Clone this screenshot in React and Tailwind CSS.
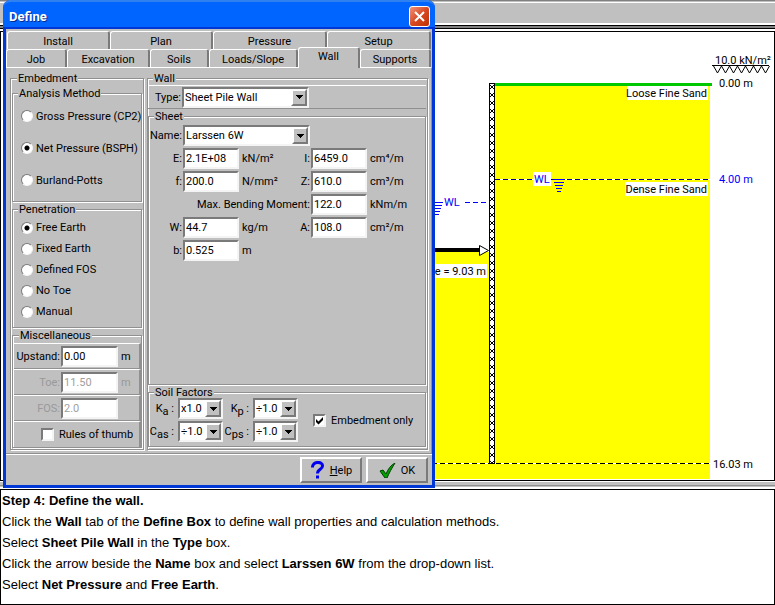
import React, { useState } from "react";
import clsx from "clsx";

const topTabs = [
  { name: "Install", width: "w-[103px]" },
  { name: "Plan", width: "w-[103px]" },
  { name: "Pressure", width: "w-[114px]" },
  { name: "Setup", width: "flex-1" },
];

const bottomTabs = [
  { name: "Job", width: "w-[61px]" },
  { name: "Excavation", width: "w-[83px]" },
  { name: "Soils", width: "w-[59px]" },
  { name: "Loads/Slope", width: "w-[89px]" },
  { name: "Wall", width: "w-[62px]" },
  { name: "Supports", width: "flex-1" },
];

const sunken =
  "border-2 border-t-[#7a7a7a] border-l-[#7a7a7a] border-r-[#f4f4f4] border-b-[#f4f4f4] bg-white";
const raised =
  "border-2 border-t-white border-l-white border-r-[#7a7a7a] border-b-[#7a7a7a] bg-[#c0c0c0]";

const Group = ({ title, className, children }) => (
  <fieldset
    className={clsx(
      "min-w-0 border border-[#909090] shadow-[1px_1px_0_#fff,inset_1px_1px_0_#fff]",
      className,
    )}
  >
    <legend className="ml-[5px] h-3 bg-[#c0c0c0] px-px leading-[14px]">{title}</legend>
    {children}
  </fieldset>
);

const Radio = ({ name, label, value, onChange, className }) => (
  <label className={clsx("flex items-center gap-[3px] pl-2", className)}>
    <input
      type="radio"
      name={name}
      checked={value === label}
      onChange={() => onChange(label)}
      className="size-3 shrink-0 appearance-none rounded-full border border-t-[#7a7a7a] border-l-[#7a7a7a] border-r-[#f4f4f4] border-b-[#f4f4f4] bg-white checked:bg-[radial-gradient(circle,#000_2px,#fff_3px)]"
    />
    {label}
  </label>
);

const Check = ({ label, defaultChecked, className }) => (
  <label className={clsx("flex items-center gap-[5px]", className)}>
    <span className="grid size-[13px]">
      <input
        type="checkbox"
        defaultChecked={defaultChecked}
        className={clsx("peer col-start-1 row-start-1 size-[13px] appearance-none", sunken)}
      />
      <svg
        viewBox="0 0 13 13"
        className="pointer-events-none invisible col-start-1 row-start-1 size-[13px] peer-checked:visible"
      >
        <path d="M3 5v3l2.5 2.5L10 6V3L5.5 7.5Z" />
      </svg>
    </span>
    {label}
  </label>
);

const Drop = ({ id, label, options, className }) => (
  <span className={clsx("relative block h-[21px]", className)}>
    <select
      id={id}
      aria-label={label}
      className={clsx("block h-full w-full appearance-none pl-px text-[11px]", sunken)}
    >
      {options.map((option) => (
        <option key={option}>{option}</option>
      ))}
    </select>
    <span
      className={clsx(
        "pointer-events-none absolute top-[2px] right-[2px] bottom-[2px] flex w-4 items-center justify-center",
        raised,
      )}
    >
      <svg viewBox="0 0 7 4" className="h-1 w-[7px]" shapeRendering="crispEdges">
        <path d="M0 0h7v1h-1v1h-1v1h-1v1h-1v-1h-1v-1h-1v-1h-1z" />
      </svg>
    </span>
  </span>
);

const Field = ({ id, value, className, disabled }) => (
  <input
    id={id}
    type="text"
    defaultValue={value}
    disabled={disabled}
    className={clsx("block h-[21px] min-w-0 pl-px text-[11px] disabled:text-[#a0a0a0]", sunken, className)}
  />
);

const MiscRow = ({ id, label, value, unit, disabled }) => (
  <div
    className={clsx(
      "flex h-[26px] items-center border-t border-r-2 border-b border-t-white border-r-[#909090] border-b-[#909090]",
      disabled && "text-[#999]",
    )}
  >
    <label htmlFor={id} className="w-[47px] pr-px text-right">
      {label}:
    </label>
    <Field id={id} value={value} disabled={disabled} className="w-[57px]" />
    <span className="pl-[3px]">{unit}</span>
  </div>
);

const FieldLabel = ({ htmlFor, children, className }) => (
  <label htmlFor={htmlFor} className={clsx("text-right", className)}>
    {children}
  </label>
);

const Tab = ({ tab, active, onSelect }) => (
  <button
    role="tab"
    aria-selected={active}
    onClick={() => onSelect(tab.name)}
    className={clsx(
      "rounded-t-[3px] border-t border-r-2 border-l border-t-white border-r-[#7a7a7a] border-l-white bg-[#c0c0c0] pt-px",
      tab.width,
      active ? "z-10 -mt-[2px] -mb-px pb-1" : "",
    )}
  >
    {tab.name}
  </button>
);

const WaterMark = ({ x, y }) => (
  <g stroke="#0000ff" transform={`translate(${x} ${y})`}>
    <path d="M-6 .5h12M-5 3.5h10M-4 6.5h8M-3 9.5h6M-2 12.5h4" />
  </g>
);

// Cross-section of the wall, y runs in page pixels from the top of the sheet
const Section = () => (
  <svg
    viewBox="1 32 773 448"
    className="block h-[448px] w-[773px] shrink-0 font-['Roboto',sans-serif] text-[11px]"
    shapeRendering="crispEdges"
  >
    <defs>
      <pattern id="links" x="490" y="85" width="4" height="8" patternUnits="userSpaceOnUse">
        <rect width="4" height="8" fill="#fff" />
        <path d="M0 0h1v1h-1zM3 0h1v1h-1zM1 1h2v2h-2zM0 3h1v1h-1zM3 3h1v1h-1z" />
      </pattern>
    </defs>
    <rect x="489" y="86" width="221" height="393" fill="#ff0" />
    <rect x="400" y="252" width="89" height="227" fill="#ff0" />
    <rect x="495" y="83" width="217" height="3" fill="#00c800" />

    <path d="M495 179.5h215" stroke="#fff" />
    <path d="M495 179.5h215" stroke="#000080" strokeDasharray="5 3" />
    <path d="M400 463.5h310" stroke="#fff" />
    <path d="M400 463.5h310" stroke="#000" strokeDasharray="5 3" />

    <rect x="489.5" y="83.5" width="5" height="380" fill="url(#links)" stroke="#000" />

    <rect x="627" y="86" width="81" height="14" fill="#fff" />
    <text x="707" y="97" textAnchor="end">Loose Fine Sand</text>
    <rect x="625" y="182" width="83" height="14" fill="#fff" />
    <text x="707" y="193" textAnchor="end">Dense Fine Sand</text>

    <rect x="533" y="172" width="18" height="14" fill="#fff" />
    <text x="534" y="183" fill="#0000ff">WL</text>
    <WaterMark x={559} y={179} />

    <WaterMark x={437} y={202} />
    <text x="444" y="206" fill="#0000ff">WL</text>
    <path d="M465 202.5h22" stroke="#0000ff" strokeDasharray="5 3" />

    <rect x="400" y="248" width="80" height="4" />
    <path d="M479.5 245.5v10l9 -5z" fill="#fff" stroke="#000" shapeRendering="auto" />
    <rect x="400" y="264" width="87" height="14" fill="#fff" />
    <text x="486" y="275" textAnchor="end">Toe = 9.03 m</text>

    <text x="715" y="64">10.0 kN/m²</text>
    <path
      d="M712 65.5h57M713.5 66l4 7l4 -7l4 7l4 -7l4 7l4 -7l4 7l4 -7l4 7l4 -7l4 7l4 -7l4 7l4 -7"
      fill="none"
      stroke="#000"
      shapeRendering="auto"
    />
    <text x="719" y="87">0.00 m</text>
    <text x="719" y="183" fill="#0000ff">4.00 m</text>
    <text x="713" y="468">16.03 m</text>
  </svg>
);

const EmbedmentPane = () => {
  const [method, setMethod] = useState("Net Pressure (BSPH)");
  const [penetration, setPenetration] = useState("Free Earth");

  return (
    <Group title="Embedment" className="w-[134px] px-px pt-[3px] pb-px">
      <Group title="Analysis Method" className="pt-px pb-[5px]">
        {["Gross Pressure (CP2)", "Net Pressure (BSPH)", "Burland-Potts"].map((item) => (
          <Radio key={item} name="method" label={item} value={method} onChange={setMethod} className="h-8" />
        ))}
      </Group>
      <Group title="Penetration" className="mt-px pt-[2px] pb-[5px]">
        {["Free Earth", "Fixed Earth", "Defined FOS", "No Toe", "Manual"].map((item) => (
          <Radio
            key={item}
            name="penetration"
            label={item}
            value={penetration}
            onChange={setPenetration}
            className="h-[21px]"
          />
        ))}
      </Group>
      <Group title="Miscellaneous" className="mt-px pt-[2px] pl-px">
        <MiscRow id="upstand" label="Upstand" value="0.00" unit="m" />
        <MiscRow id="toe" label="Toe" value="11.50" unit="m" disabled />
        <MiscRow id="fos" label="FOS" value="2.0" unit="" disabled />
        <div className="flex h-[26px] items-center border-t border-r-2 border-t-white border-r-[#909090] pl-[27px]">
          <Check label="Rules of thumb" />
        </div>
      </Group>
    </Group>
  );
};

const WallPane = () => (
  <Group title="Wall" className="flex-1 pt-px pb-px">
    <div className="mr-px flex h-6 items-center border-t border-b border-t-white border-b-[#909090]">
      <FieldLabel htmlFor="type" className="w-[34px] pr-px">Type:</FieldLabel>
      <Drop id="type" options={["Sheet Pile Wall", "Bored Pile Wall", "Diaphragm Wall"]} className="w-[127px]" />
    </div>
    <Group title="Sheet" className="mt-px mr-px h-[275px] pt-[2px]">
      <div className="flex h-[23px] items-center">
        <FieldLabel htmlFor="name" className="w-[34px] pr-px">Name:</FieldLabel>
        <Drop id="name" options={["Larssen 6W", "Larssen 20W", "Larssen 25W"]} className="w-[127px]" />
      </div>
      <div className="grid grid-cols-[34px_56px_72px_56px_1fr]">
        <div className="col-span-5 grid h-[23px] grid-cols-subgrid items-center">
          <FieldLabel htmlFor="e" className="pr-px">E:</FieldLabel>
          <Field id="e" value="2.1E+08" />
          <span className="flex justify-between pr-px pl-[3px]">
            kN/m² <label htmlFor="i">I:</label>
          </span>
          <Field id="i" value="6459.0" />
          <span className="pl-[3px]">cm⁴/m</span>
        </div>
        <div className="col-span-5 grid h-[23px] grid-cols-subgrid items-center">
          <FieldLabel htmlFor="f" className="pr-px">f:</FieldLabel>
          <Field id="f" value="200.0" />
          <span className="flex justify-between pr-px pl-[3px]">
            N/mm² <label htmlFor="z">Z:</label>
          </span>
          <Field id="z" value="610.0" />
          <span className="pl-[3px]">cm³/m</span>
        </div>
        <div className="col-span-5 grid h-[23px] grid-cols-subgrid items-center">
          <FieldLabel htmlFor="moment" className="col-span-3 pr-px">Max. Bending Moment:</FieldLabel>
          <Field id="moment" value="122.0" />
          <span className="pl-[3px]">kNm/m</span>
        </div>
        <div className="col-span-5 grid h-[23px] grid-cols-subgrid items-center">
          <FieldLabel htmlFor="w" className="pr-px">W:</FieldLabel>
          <Field id="w" value="44.7" />
          <span className="flex justify-between pr-px pl-[3px]">
            kg/m <label htmlFor="a">A:</label>
          </span>
          <Field id="a" value="108.0" />
          <span className="pl-[3px]">cm²/m</span>
        </div>
        <div className="col-span-5 grid h-[23px] grid-cols-subgrid items-center">
          <FieldLabel htmlFor="b" className="pr-px">b:</FieldLabel>
          <Field id="b" value="0.525" />
          <span className="pl-[3px]">m</span>
        </div>
      </div>
    </Group>
    <Group title="Soil Factors" className="mt-px mr-px">
      <div className="flex items-center pb-1">
        <div className="grid grid-cols-[29px_45px_30px_45px] items-center gap-y-[2px]">
          <FieldLabel htmlFor="ka" className="pr-1">K<sub className="text-[11px]">a</sub> :</FieldLabel>
          <Drop id="ka" options={["x1.0", "x0.5"]} />
          <FieldLabel htmlFor="kp" className="pr-1">K<sub className="text-[11px]">p</sub> :</FieldLabel>
          <Drop id="kp" options={["÷1.0", "÷1.5"]} />
          <FieldLabel htmlFor="cas" className="pr-1">C<sub className="text-[11px]">as</sub> :</FieldLabel>
          <Drop id="cas" options={["÷1.0", "÷1.5"]} />
          <FieldLabel htmlFor="cps" className="pr-1">C<sub className="text-[11px]">ps</sub> :</FieldLabel>
          <Drop id="cps" options={["÷1.0", "÷1.5"]} />
        </div>
        <Check label="Embedment only" defaultChecked className="pl-[15px]" />
      </div>
    </Group>
  </Group>
);

const DefineDialog = () => {
  const [active, setActive] = useState("Wall");

  return (
    <section
      aria-label="Define"
      className="relative ml-[3px] w-[432px] rounded-t-lg border-x-[3px] border-b-[3px] border-[#0038d8] bg-[#c0c0c0] whitespace-nowrap"
    >
      <header className="-mx-[3px] flex h-[29px] items-center justify-between rounded-t-lg border-t-2 border-b-2 border-t-[#2f80f0] border-b-[#0038d8] bg-[#0064ff] pr-[5px] pl-[6px]">
        <h1 className="pt-1 text-[13px] font-bold text-white [text-shadow:1px_1px_0_#002a90]">Define</h1>
        <button
          aria-label="Close"
          className="mt-1 flex size-[21px] items-center justify-center rounded-[3px] border border-white bg-linear-to-br from-[#f09078] via-[#d84820] to-[#c03000]"
        >
          <svg viewBox="0 0 11 11" className="size-[11px]" stroke="#fff" strokeWidth="2">
            <path d="M1 1l9 9M10 1l-9 9" />
          </svg>
        </button>
      </header>

      <nav role="tablist" className="pt-[2px] pr-px">
        <div className="flex h-[18px] pl-px">
          {topTabs.map((tab) => (
            <Tab key={tab.name} tab={tab} active={active === tab.name} onSelect={setActive} />
          ))}
        </div>
        <div className="flex h-[18px]">
          {bottomTabs.map((tab) => (
            <Tab key={tab.name} tab={tab} active={active === tab.name} onSelect={setActive} />
          ))}
        </div>
      </nav>

      <main className="flex gap-[3px] border-t border-r border-b border-t-white border-r-[#909090] border-b-[#909090] pt-1 pr-[3px] pb-[3px] pl-1">
        <EmbedmentPane />
        <WallPane />
      </main>

      <footer className="flex justify-end gap-1 border-t border-white pt-[2px] pr-1 pb-[2px]">
        <button className={clsx("flex h-[26px] w-[62px] items-center justify-center gap-[5px]", raised)}>
          <svg viewBox="0 0 15 18" className="h-[18px] w-[15px]" fill="none" stroke="#0000f0" strokeWidth="3">
            <path d="M2.5 6.5C2 0 13 0 12.5 5C12.5 8.500 7.500 8 7.500 12.500" />
            <path d="M7.500 14.500v3" />
          </svg>
          <span><u>H</u>elp</span>
        </button>
        <button className={clsx("flex h-[26px] w-[62px] items-center justify-center gap-[5px]", raised)}>
          <svg viewBox="0 0 17 15" className="h-[15px] w-[17px]">
            <path d="M1 8l3-1l3 4C9 6 12 2 16 0C13 5 10 10 8 15H6Z" fill="#00a000" stroke="#004000" />
          </svg>
          OK
        </button>
      </footer>
    </section>
  );
};

const App = () => (
  <div className="overflow-x-hidden bg-white font-['Roboto',Arial,sans-serif] text-[11px] leading-[13px] text-black">
    <div className="relative">
      <div className="absolute inset-0 flex flex-col bg-[#c0c0c0]">
        <div className="h-[25px] shrink-0 border-t border-b-2 border-t-[#808080] border-b-white pt-px">
          <div className="h-px bg-white" />
        </div>
        <div className="h-1 shrink-0 border-y border-black bg-[#808080]" />
        <div className="h-[2px] shrink-0 bg-white" />
        <div className="flex min-h-0 flex-1 justify-start overflow-hidden border border-black bg-white">
          <Section />
        </div>
        <div className="h-[7px] shrink-0 border-t border-b border-white pt-[3px]">
          <div className="h-px bg-[#909090]" />
        </div>
      </div>
      <DefineDialog />
    </div>

    <article className="mt-px border border-black pb-[9px] pl-px font-['Liberation_Sans',Arial,sans-serif] text-[13px] leading-[21px]">
      <h2 className="font-bold">Step 4: Define the wall.</h2>
      <p>
        Click the <b>Wall</b> tab of the <b>Define Box</b> to define wall properties and calculation
        methods.
      </p>
      <p>
        Select <b>Sheet Pile Wall</b> in the <b>Type</b> box.
      </p>
      <p>
        Click the arrow beside the <b>Name</b> box and select <b>Larssen 6W</b> from the drop-down
        list.
      </p>
      <p>
        Select <b>Net Pressure</b> and <b>Free Earth</b>.
      </p>
    </article>
  </div>
);

export default App;
